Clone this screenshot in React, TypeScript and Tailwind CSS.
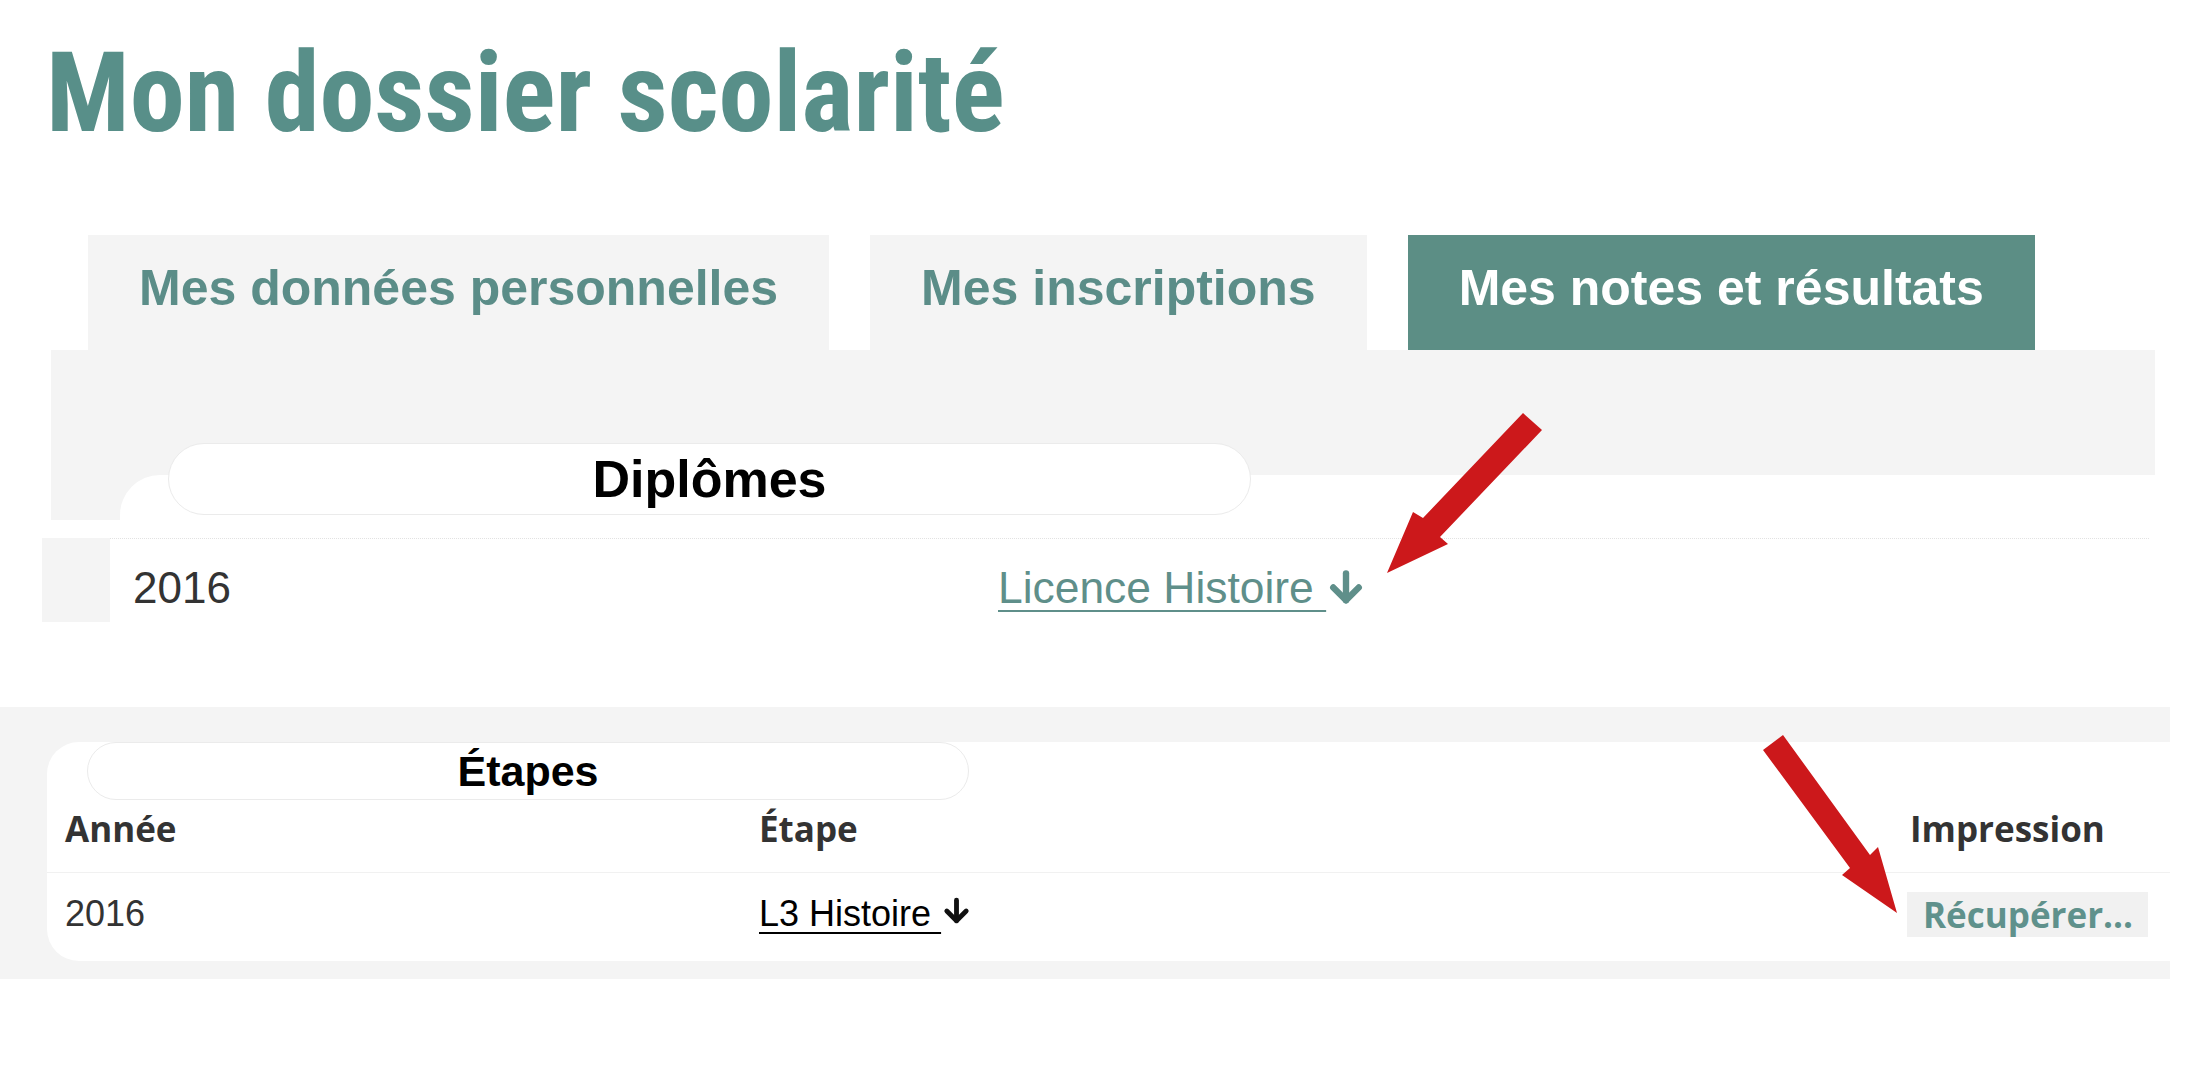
import type { ReactNode } from "react";

function DownArrow({ className, color }: { className?: string; color: string }) {
  return (
    <svg viewBox="0 0 24 26" className={className} fill="none" stroke={color} strokeWidth={4.5} strokeLinecap="round" strokeLinejoin="round">
      <path d="M12 3v19" />
      <path d="M3 13l9 9 9-9" />
    </svg>
  );
}

function Tab({ children, active }: { children: ReactNode; active?: boolean }) {
  return (
    <div
      className={
        active
          ? "h-[115px] px-[51px] pt-[28px] bg-[#5c8e85] text-white"
          : "h-[115px] px-[51px] pt-[28px] bg-[#f4f4f4] text-[#5b8d88]"
      }
    >
      <span className="block text-[50px] leading-[50px] font-bold font-['Liberation_Sans',Arial,sans-serif] whitespace-nowrap">
        {children}
      </span>
    </div>
  );
}

function Legend({ label, className }: { label: string; className: string }) {
  return (
    <div
      className={`flex items-center justify-center rounded-full border border-[#ebebeb] bg-white font-bold text-black font-['Liberation_Sans',Arial,sans-serif] ${className}`}
    >
      {label}
    </div>
  );
}

export default function App() {
  return (
    <div className="relative w-[2208px] h-[1092px] overflow-hidden bg-white">
      <h1 className="ml-[46px] pt-[38px] text-[110.5px] leading-[111px] font-bold text-[#588f89] font-['Roboto',sans-serif] [font-stretch:condensed] whitespace-nowrap">
        Mon dossier scolarité
      </h1>

      <div className="mt-[86px] flex gap-[41px] pl-[88px]">
        <Tab>Mes données personnelles</Tab>
        <Tab>Mes inscriptions</Tab>
        <Tab active>Mes notes et résultats</Tab>
      </div>

      {/* Diplômes */}
      <div className="ml-[51px] w-[2104px] bg-[#f4f4f4] pt-[125px]">
        <div className="flex">
          <div className="w-[69px] shrink-0" />
          <div className="flex-1 rounded-tl-[40px] bg-white pb-[5px]">
            <Legend label="Diplômes" className="-mt-[32px] ml-[48px] w-[1083px] h-[72px] text-[52px]" />
          </div>
        </div>
      </div>

      <div className="mt-[18px] ml-[42px] flex h-[84px] w-[2107px] font-['Liberation_Sans',Arial,sans-serif]">
        <div className="w-[68px] shrink-0 bg-[#f4f4f4]" />
        <div className="flex flex-1 border-t border-dotted border-[#e2e2e2] pt-[27px]">
          <div className="w-[888px] shrink-0 pl-[23px] text-[44px] leading-[44px] text-[#333]">2016</div>
          <a className="flex items-start text-[44.4px] leading-[44px] text-[#5f8f8a] underline decoration-[2px] underline-offset-[7px]">
            <span className="whitespace-pre">Licence Histoire </span>
            <DownArrow color="#5f8f8a" className="mt-[3px] ml-[3px] h-[37px] w-[34px]" />
          </a>
        </div>
      </div>

      {/* Étapes */}
      <div className="mt-[85px] w-[2170px] bg-[#f4f4f4] pt-[61px] pb-[18px] pl-[47px]">
        <div className="rounded-l-[32px] bg-white">
          <Legend label="Étapes" className="-mt-[26px] ml-[40px] w-[882px] h-[58px] text-[43px]" />

          <div className="flex h-[73px] border-b border-[#f1f1f1] pt-[11px] text-[35px] leading-[35px] font-bold text-[#333] font-['Open_Sans',sans-serif]">
            <div className="w-[712px] shrink-0 pl-[18px]">Année</div>
            <div className="flex-1">Étape</div>
            <div className="w-[263px] shrink-0 pl-[3px]">Impression</div>
          </div>

          <div className="flex h-[88px] font-['Liberation_Sans',Arial,sans-serif]">
            <div className="w-[712px] shrink-0 pl-[18px] pt-[23px] text-[36px] leading-[36px] text-[#333]">2016</div>
            <div className="flex-1 pt-[23px]">
              <a className="inline-flex items-start text-[36px] leading-[36px] text-black underline decoration-[2px] underline-offset-[6px]">
                <span className="whitespace-pre">L3 Histoire </span>
                <DownArrow color="#111" className="mt-[1px] ml-[2px] h-[28px] w-[27px]" />
              </a>
            </div>
            <div className="w-[263px] shrink-0 pt-[19px]">
              <button className="flex h-[45px] w-[241px] items-center bg-[#f1f1f1] px-[16px] text-[35px] leading-[35px] font-bold text-[#5f918c] font-['Open_Sans',sans-serif]">
                Récupérer...
              </button>
            </div>
          </div>
        </div>
      </div>

      {/* red annotation arrows */}
      <svg className="pointer-events-none absolute inset-0" width={2208} height={1092} viewBox="0 0 2208 1092">
        <polygon fill="#cc181b" points="1523,413 1542,430 1440,537 1448,544 1387,573 1413,512 1423,518" />
        <polygon fill="#cc181b" points="1783,735 1870,855 1878,847 1897,913 1842,875 1850,868 1763,750" />
      </svg>
    </div>
  );
}
